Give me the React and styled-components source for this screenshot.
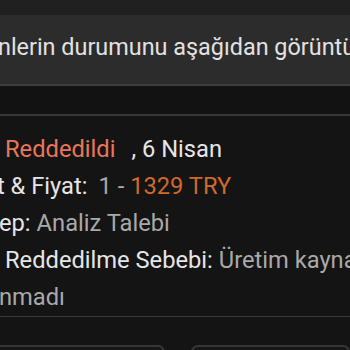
import React from "react";
import styled, { createGlobalStyle } from "styled-components";

const Global = createGlobalStyle`
  html, body { margin: 0; padding: 0; background: #121212; }
  body { font-family: Roboto, "Noto Sans", "Liberation Sans", sans-serif; }
`;

const Page = styled.div`
  width: 350px;
  height: 350px;
  overflow: hidden;
  background: #121212;
  display: flex;
  flex-direction: column;
`;

const TopBar = styled.div`
  height: 15px;
  flex: none;
  background: #202020;
`;

const Notice = styled.div`
  flex: none;
  height: 71px;
  box-sizing: border-box;
  background: #2c2c2c;
  border-bottom: 2px solid #3d3d3d;
  display: flex;
  align-items: center;
  padding-bottom: 6px;
  overflow: hidden;
`;

const NoticeText = styled.span`
  font-size: 23.4px;
  color: #e2e2e2;
  white-space: nowrap;
  margin-left: -2px;
`;

const Spacer = styled.div`
  height: 30px;
  flex: none;
  box-sizing: border-box;
  background: #121212;
  border-bottom: 2px solid #383838;
`;

const Card = styled.div`
  flex: none;
  background: #141414;
  padding-top: 15px;
  border-bottom: 1px solid #3a3a3a;
  display: flex;
  flex-direction: column;
  overflow: hidden;
`;

const Row = styled.div`
  font-size: 23.7px;
  line-height: 37px;
  height: 37px;
  white-space: nowrap;
  margin-left: ${(p) => p.$shift ?? 0}px;
  color: #e6e6e6;
`;

const Label = styled.span`
  color: #e6e6e6;
`;

const Value = styled.span`
  color: #a9a9a9;
  margin-left: ${(p) => p.$gap ?? 6}px;
`;

const Status = styled.span`
  color: #e8775a;
  margin-right: 16px;
`;

const Price = styled.span`
  color: #d0692a;
`;

const Footer = styled.div`
  flex: 1;
  background: #141414;
  padding-top: 28px;
  display: flex;
  gap: 26px;
  margin-left: -10px;
`;

const Button = styled.div`
  flex: ${(p) => (p.$wide ? "0 0 171px" : "1")};
  height: 44px;
  border: 2px solid #363636;
  border-radius: 7px;
  background: #161616;
`;

export default function App() {
  return (
    <>
      <Global />
      <Page>
        <TopBar />
        <Notice>
          <NoticeText>nlerin durumunu aşağıdan görüntüleyebilirsiniz</NoticeText>
        </Notice>
        <Spacer />
        <Card>
          <Row $shift={5}>
            <Status>Reddedildi</Status>, 6 Nisan
          </Row>
          <Row $shift={-3}>
            <Label>t &amp; Fiyat:</Label>
            <Value $gap={11}>
              1 - <Price>1329 TRY</Price>
            </Value>
          </Row>
          <Row $shift={-1}>
            <Label>ep:</Label>
            <Value>Analiz Talebi</Value>
          </Row>
          <Row $shift={5}>
            <Label>Reddedilme Sebebi:</Label>
            <Value>Üretim kaynağı</Value>
          </Row>
          <Row $shift={-1}>
            <Value $gap={0}>nmadı</Value>
          </Row>
        </Card>
        <Footer>
          <Button $wide />
          <Button />
        </Footer>
      </Page>
    </>
  );
}
